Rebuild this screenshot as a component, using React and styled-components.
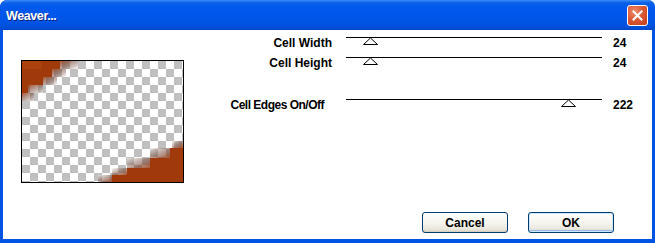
import React from "react";
import styled, { createGlobalStyle } from "styled-components";

const Global = createGlobalStyle`
  html, body { margin: 0; padding: 0; background: #fff; }
  body { font-family: "Liberation Sans", Arial, sans-serif; }
`;

const Window = styled.div`
  width: 655px;
  height: 243px;
  box-sizing: border-box;
  display: flex;
  flex-direction: column;
  background: #0054e3;
  border-radius: 7px 7px 0 0;
  overflow: hidden;
`;

const TitleBar = styled.div`
  height: 30px;
  flex: none;
  display: flex;
  align-items: center;
  justify-content: space-between;
  padding: 0 7px 0 6px;
  background: linear-gradient(
    to bottom,
    #3c8cf7 0px,
    #0a5fe6 3px,
    #0058ee 8px,
    #0055e6 20px,
    #0050db 27px,
    #0047c6 30px
  );
`;

const Title = styled.span`
  color: #fff;
  font-weight: bold;
  font-size: 12.5px;
  letter-spacing: -0.4px;
  text-shadow: 1px 1px 0 #0a1e7a;
  margin-top: 1px;
`;

const CloseButton = styled.div`
  width: 19px;
  height: 19px;
  border: 1px solid #fff;
  border-radius: 3px;
  display: flex;
  align-items: center;
  justify-content: center;
  background: radial-gradient(circle at 35% 30%, #ec8c6e 0%, #dd5a35 45%, #c53c1a 100%);
  margin-top: 1px;
`;

const Client = styled.div`
  flex: 1;
  margin: 0 3px 4px 3px;
  background: #fff;
  display: flex;
  flex-direction: column;
`;

const Main = styled.div`
  height: 182px;
  display: flex;
`;

const PreviewPane = styled.div`
  width: 200px;
  flex: none;
  padding: 30px 0 0 18px;
  box-sizing: border-box;
`;

const Preview = styled.div`
  width: 161px;
  height: 121px;
  border: 1px solid #000;
  background: conic-gradient(#c0c0c0 0 25%, #fff 0 50%, #c0c0c0 0 75%, #fff 0);
  background-size: 16px 16px;
  svg { display: block; }
`;

const Controls = styled.div`
  flex: 1;
  padding-top: 6px;
  display: flex;
  flex-direction: column;
`;

const Row = styled.div`
  display: grid;
  grid-template-columns: 129px 256px auto;
  height: 20px;
  margin-top: ${(p) => p.$gap || 0}px;
`;

const Label = styled.span`
  text-align: right;
  font-size: 12px;
  line-height: 14px;
  font-weight: bold;
  color: #000;
  white-space: nowrap;
  padding-right: ${(p) => p.$inset || 0}px;
  letter-spacing: ${(p) => (p.$inset ? "-0.5px" : "0")};
`;

const Track = styled.div`
  position: relative;
  margin: 1px 0 0 14px;
  width: 256px;
  height: 19px;
  border-top: 1px solid #000;
  box-sizing: border-box;
`;

const Thumb = styled.svg`
  position: absolute;
  top: -1px;
`;

const Value = styled.span`
  padding-left: 25px;
  font-size: 12px;
  line-height: 14px;
  font-weight: bold;
  color: #000;
`;

const Footer = styled.div`
  display: flex;
  justify-content: flex-end;
  gap: 20px;
  padding-right: 38px;
`;

const Button = styled.button`
  width: 86px;
  height: 21px;
  padding: 0;
  border: 1px solid #003c74;
  border-radius: 3px;
  font-family: "Liberation Sans", Arial, sans-serif;
  font-size: 12px;
  font-weight: bold;
  color: #000;
  background: linear-gradient(to bottom, #ffffff 0%, #f6f5ef 50%, #e9e7dd 85%, #d6d0c2 100%);
  box-shadow: ${(p) =>
    p.$default
      ? "inset 0 0 0 1px #cee7ff, inset 0 -1px 0 1px #98b8ea"
      : "inset 0 -1px 0 #d6d0c5"};
`;

const sliders = [
  { label: "Cell Width", value: 24 },
  { label: "Cell Height", value: 24 },
  { label: "Cell Edges On/Off", value: 222, gap: 22, inset: 8 },
];

const rust = "#a13a0b";

const TriangleThumb = ({ value }) => (
  <Thumb width="16" height="9" viewBox="0 0 16 9" style={{ left: value - 7 }}>
    <polygon points="7.5,1 14.5,7.5 0.5,7.5" fill="#fff" stroke="#000" strokeWidth="1" />
  </Thumb>
);

const fadesTL = [
  [38, 0, 18, 8],
  [30, 8, 14, 8],
  [21, 16, 14, 8],
  [6, 24, 15, 8],
  [0, 32, 12, 8],
];

const fadesBR = [
  [150, 80, 11, 7],
  [128, 87, 20, 10],
  [105, 97, 23, 10],
  [90, 107, 15, 7],
  [76, 114, 14, 7],
];

const PreviewImage = () => (
  <svg width="161" height="121" viewBox="0 0 161 121">
    <defs>
      <linearGradient id="fadeR" x1="0" y1="0" x2="1" y2="1">
        <stop offset="0" stopColor={rust} stopOpacity="0.85" />
        <stop offset="0.5" stopColor="#6b3a2a" stopOpacity="0.45" />
        <stop offset="1" stopColor="#fff" stopOpacity="0.6" />
      </linearGradient>
      <linearGradient id="fadeL" x1="1" y1="1" x2="0" y2="0">
        <stop offset="0" stopColor={rust} stopOpacity="0.85" />
        <stop offset="0.5" stopColor="#6b3a2a" stopOpacity="0.45" />
        <stop offset="1" stopColor="#fff" stopOpacity="0.6" />
      </linearGradient>
    </defs>
    <polygon
      points="0,0 38,0 38,8 30,8 30,16 21,16 21,24 6,24 6,32 0,32"
      fill={rust}
    />
    <rect x="0" y="0" width="20" height="8" fill="#b5480f" opacity="0.5" />
    {fadesTL.map(([x, y, w, h], i) => (
      <rect key={i} x={x} y={y} width={w} height={h} fill="url(#fadeR)" />
    ))}
    <polygon
      points="148,87 161,87 161,121 90,121 90,114 105,114 105,107 128,107 128,97 148,97"
      fill={rust}
    />
    {fadesBR.map(([x, y, w, h], i) => (
      <rect key={i} x={x} y={y} width={w} height={h} fill="url(#fadeL)" />
    ))}
  </svg>
);

export default function App() {
  return (
    <>
      <Global />
      <Window>
        <TitleBar>
          <Title>Weaver...</Title>
          <CloseButton>
            <svg width="11" height="11" viewBox="0 0 11 11">
              <path d="M1.5 1.5 L9.5 9.5 M9.5 1.5 L1.5 9.5" stroke="#fff" strokeWidth="2" strokeLinecap="square" />
            </svg>
          </CloseButton>
        </TitleBar>
        <Client>
          <Main>
            <PreviewPane>
              <Preview>
                <PreviewImage />
              </Preview>
            </PreviewPane>
            <Controls>
              {sliders.map((s) => (
                <Row key={s.label} $gap={s.gap}>
                  <Label $inset={s.inset}>{s.label}</Label>
                  <Track>
                    <TriangleThumb value={s.value} />
                  </Track>
                  <Value>{s.value}</Value>
                </Row>
              ))}
            </Controls>
          </Main>
          <Footer>
            <Button>Cancel</Button>
            <Button $default>OK</Button>
          </Footer>
        </Client>
      </Window>
    </>
  );
}
